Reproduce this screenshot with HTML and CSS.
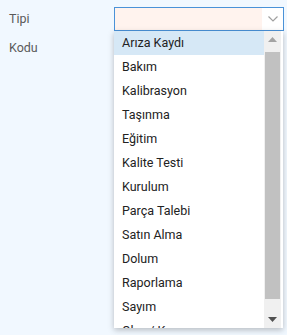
FILE: index.html
```html
<!DOCTYPE html>
<html lang="tr">
<head>
    <meta charset="UTF-8">
    <title>Tipi</title>
    <link rel="stylesheet" href="styles.css">
</head>
<body>
    <div class="form">
        <div class="form-row">
            <label class="form-label">Tipi</label>
            <div class="select-wrap">
                <div class="select-box">
                    <span class="select-value"></span>
                    <span class="select-arrow">
                        <svg width="10" height="6" viewBox="0 0 10 6"><path d="M0.5 0.5 L5 5 L9.5 0.5" fill="none" stroke="#a0a0a0" stroke-width="1.2"/></svg>
                    </span>
                </div>
                <div class="dropdown">
                    <ul class="options">
                        <li class="option active">Arıza Kaydı</li>
                        <li class="option">Bakım</li>
                        <li class="option">Kalibrasyon</li>
                        <li class="option">Taşınma</li>
                        <li class="option">Eğitim</li>
                        <li class="option">Kalite Testi</li>
                        <li class="option">Kurulum</li>
                        <li class="option">Parça Talebi</li>
                        <li class="option">Satın Alma</li>
                        <li class="option">Dolum</li>
                        <li class="option">Raporlama</li>
                        <li class="option">Sayım</li>
                        <li class="option">Olay / Kaza</li>
                    </ul>
                    <div class="scrollbar">
                        <div class="scroll-btn">
                            <svg width="9" height="5" viewBox="0 0 9 5"><path d="M0 5 L4.5 0 L9 5 Z" fill="#a3a3a3"/></svg>
                        </div>
                        <div class="scroll-track"><div class="scroll-thumb"></div></div>
                        <div class="scroll-btn">
                            <svg width="9" height="5" viewBox="0 0 9 5"><path d="M0 0 L4.5 5 L9 0 Z" fill="#505050"/></svg>
                        </div>
                    </div>
                </div>
            </div>
        </div>
        <div class="form-row">
            <label class="form-label">Kodu</label>
        </div>
    </div>
</body>
</html>
```

FILE: styles.css
```css
body {
    margin: 0;
    background: #f1f8ff;
    font-family: Roboto, 'Liberation Sans', sans-serif;
    font-size: 12.5px;
    color: #222;
    height: 335px;
    overflow: hidden;
}
.form {
    padding: 7px 3px 0 9px;
}
.form-row {
    display: flex;
    align-items: flex-start;
    height: 29px;
}
.form-label {
    width: 105px;
    color: #5a5a5a;
    line-height: 24px;
}
.select-wrap {
    position: relative;
    width: 170px;
}
.select-box {
    display: flex;
    height: 24px;
    box-sizing: border-box;
    border: 1px solid #4a92d8;
    background: #fff;
}
.select-value {
    flex: 1;
    background: #fff3ee;
}
.select-arrow {
    width: 21px;
    display: flex;
    align-items: center;
    justify-content: center;
}
.dropdown {
    position: absolute;
    top: 24px;
    left: 0;
    width: 169px;
    height: 297px;
    display: flex;
    background: #fff;
    box-shadow: 0 2px 6px rgba(0,0,0,0.25);
    z-index: 10;
}
.options {
    flex: 1;
    margin: 0;
    padding: 0;
    list-style: none;
    overflow: hidden;
}
.option {
    height: 24px;
    line-height: 24px;
    padding-left: 8px;
    white-space: nowrap;
}
.option.active {
    background: #d6e8f6;
}
.scrollbar {
    width: 17px;
    margin-right: 2px;
    display: flex;
    flex-direction: column;
    background: #f0f0f0;
}
.scroll-btn {
    height: 17px;
    display: flex;
    align-items: center;
    justify-content: center;
    flex-shrink: 0;
}
.scroll-track {
    flex: 1;
    padding: 4px 1px 12px 1px;
    display: flex;
}
.scroll-thumb {
    flex: 1;
    background: #c1c1c1;
}
```
